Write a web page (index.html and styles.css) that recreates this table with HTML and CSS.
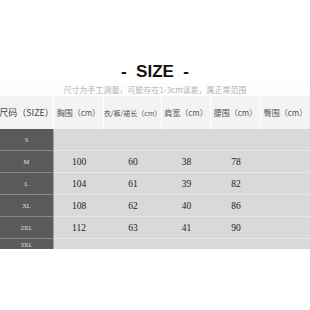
FILE: index.html
```html
<!DOCTYPE html>
<html>
<head>
<meta charset="utf-8">
<link rel="stylesheet" href="styles.css">
</head>
<body>
<div class="page">
  <div class="title">-  SIZE  -</div>
  <div class="subtitle">尺寸为手工测量，可能存在1-3cm误差，属正常范围</div>
  <div class="head">
    <div class="hcell first">尺码（SIZE）</div>
    <div class="hcell">胸围（cm）</div>
    <div class="hcell small">衣/裤/裙长（cm）</div>
    <div class="hcell">肩宽（cm）</div>
    <div class="hcell">腰围（cm）</div>
    <div class="hcell">臀围（cm）</div>
  </div>
  <div class="row"><div class="size">S</div><div class="val"></div><div class="val"></div><div class="val"></div><div class="val"></div><div class="val"></div></div>
  <div class="row"><div class="size">M</div><div class="val">100</div><div class="val">60</div><div class="val">38</div><div class="val">78</div><div class="val"></div></div>
  <div class="row"><div class="size">L</div><div class="val">104</div><div class="val">61</div><div class="val">39</div><div class="val">82</div><div class="val"></div></div>
  <div class="row"><div class="size">XL</div><div class="val">108</div><div class="val">62</div><div class="val">40</div><div class="val">86</div><div class="val"></div></div>
  <div class="row"><div class="size">2XL</div><div class="val">112</div><div class="val">63</div><div class="val">41</div><div class="val">90</div><div class="val"></div></div>
  <div class="row last"><div class="size">3XL</div><div class="val"></div><div class="val"></div><div class="val"></div><div class="val"></div><div class="val"></div></div>
</div>
</body>
</html>
```
FILE: styles.css
```css
html, body {
  margin: 0;
  padding: 0;
  background: #ffffff;
}
.page {
  width: 310px;
  padding-top: 60px;
  font-family: "Liberation Sans", "Noto Sans CJK SC", sans-serif;
}
.title {
  height: 23px;
  line-height: 23px;
  text-align: center;
  font-size: 17px;
  font-weight: bold;
  color: #111111;
  white-space: pre;
}
.subtitle {
  height: 13px;
  line-height: 13px;
  text-align: center;
  font-size: 8px;
  color: #b2b2b2;
  background: #fdfdfd;
  font-family: "Noto Sans CJK SC", sans-serif;
}
.head {
  display: grid;
  grid-template-columns: 53px 49px 57px 48px 49px 49px;
  column-gap: 1px;
  height: 33px;
  background: #ffffff;
}
.hcell {
  background: #f3f3f3;
  display: flex;
  align-items: center;
  justify-content: center;
  font-family: "Noto Sans CJK SC", sans-serif;
  font-size: 8px;
  color: #555555;
  white-space: nowrap;
  overflow: hidden;
}
.hcell.first {
  font-size: 9px;
  color: #444444;
}
.hcell.small {
  font-size: 7px;
}
.row {
  display: grid;
  grid-template-columns: 54px 50px 58px 49px 50px 49px;
  height: 22px;
  background: #d9d9d9;
}
.row.last {
  height: 10px;
}
.size {
  background: #5a5a5a;
  border-right: 1px solid #a3a3a3;
  border-bottom: 1px solid #8a8a8a;
  display: flex;
  align-items: center;
  justify-content: center;
  font-family: "Liberation Serif", serif;
  font-size: 6.5px;
  color: #e2e2e2;
}
.val {
  border-bottom: 1px solid #e8e8e8;
  display: flex;
  align-items: center;
  justify-content: center;
  font-family: "Liberation Serif", serif;
  font-size: 9.5px;
  color: #222222;
}
.row.last .size,
.row.last .val {
  border-bottom: none;
  align-items: flex-end;
  line-height: 8px;
}
```
